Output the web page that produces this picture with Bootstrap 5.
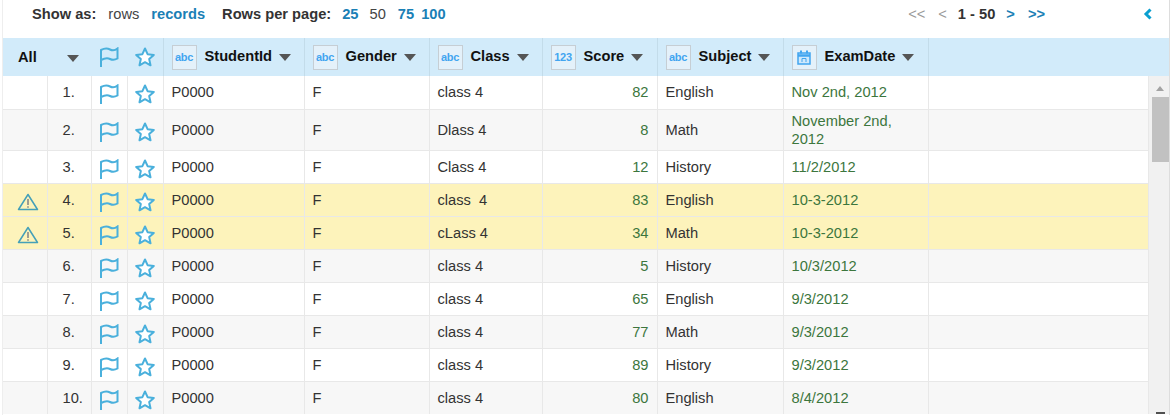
<!DOCTYPE html>
<html lang="en">
<head>
  <meta charset="UTF-8">
  <meta name="viewport" content="width=device-width, initial-scale=1">
  <title>Grid</title>
  <link href="https://cdn.jsdelivr.net/npm/bootstrap@5.3.0/dist/css/bootstrap.min.css" rel="stylesheet">
  <style>
    body { font-family: "Liberation Sans", Arial, sans-serif; font-size: 11pt; color: #333; background: #fff; overflow: hidden; }
    a { text-decoration: none; color: #1a80b6; }
    .grid-wrap { width: 1168px; height: 415px; margin-left: 2px; border-left: 1px solid #eee; border-right: 1px solid #ddd; overflow: hidden; }
    .grid-toolbar { height: 38px; padding: 0 16px 10px 29px; font-weight: 700; }
    .tb-plain { font-weight: 400; color: #444; }
    .tb-muted { color: #999; }
    .sp-7 { margin-left: 7px; }
    .sp-11 { margin-left: 11px; }
    .sp-12 { margin-left: 12px; }
    .sp-13 { margin-left: 13px; }
    .sp-17 { margin-left: 17px; }
    .pager-gap { margin-left: 98px; }
    .grid-table { table-layout: fixed; width: 1146px; margin: 0; border-collapse: collapse; font-size: 11pt; line-height: 18px; --bs-table-color: #333; color: #333; }
    .grid-table col.c-all, .grid-table col.c-num { width: 44px; }
    .grid-table col.c-flag, .grid-table col.c-star { width: 36px; }
    .grid-table col.c-id { width: 141px; }
    .grid-table col.c-gender { width: 125px; }
    .grid-table col.c-class { width: 113px; }
    .grid-table col.c-score { width: 115px; }
    .grid-table col.c-subject { width: 126px; }
    .grid-table col.c-date { width: 145px; }
    .head-table { width: 1166px; --bs-table-bg: #d2ebfa; }
    .head-table th { height: 38px; padding: 0 8px; border: 0; border-right: 1px solid #c3dcea; white-space: nowrap; font-weight: 700; color: #111; vertical-align: middle; }
    .head-table th.no-line { border-right: 0; }
    .head-table th.pad-wide { padding-left: 15px; }
    .head-table th.pad-caret { padding-left: 13px; }
    .head-table th.ico-cell, .grid-table td.ico-cell { padding: 0; text-align: center; }
    .type-ico { display: inline-flex; align-items: center; justify-content: center; width: 25px; height: 25px; margin-right: 8px; border: 1px solid #c6ced4; background: #e4f1fa; color: #42a5f0; font-size: 11px; font-weight: 700; letter-spacing: -.3px; vertical-align: middle; }
    .sort-caret { display: inline-block; width: 0; height: 0; margin-left: 7px; border-left: 6px solid transparent; border-right: 6px solid transparent; border-top: 7px solid #555; vertical-align: 0; }
    .grid-body { height: 338px; overflow: hidden; }
    .grid-body .grid-table td { height: 33px; padding: 2px 8px; border: 0; border-right: 1px solid #e8e8e8; border-bottom: 1px solid #e8e8e8; vertical-align: middle; }
    .grid-body .grid-table td.ico-cell { padding: 4px 0 0; }
    .grid-body .grid-table td.warn-cell { padding-left: 6px; }
    .grid-body .grid-table td.num-cell { padding-left: 15px; }
    .val-num { color: #3c763d !important; text-align: right; }
    .val-date { color: #3c763d !important; }
    .row-alt { --bs-table-bg: #f7f7f7; }
    .row-warn { --bs-table-bg: #fdf3bb; }
    .fake-scroll { width: 20px; height: 338px; background: #f1f1f1; flex: none; padding-left: 3px; }
    .scroll-up { height: 21px; padding-top: 10px; }
    .scroll-up i { display: block; width: 0; margin-left: 4px; border-left: 4.5px solid transparent; border-right: 4.5px solid transparent; border-bottom: 5px solid #a3a3a3; }
    .scroll-thumb { width: 17px; height: 65px; background: #c1c1c1; }
    .scroll-down { width: 9px; height: 2px; margin-left: 4px; background: #505050; }
    svg { display: inline-block; vertical-align: middle; }
  </style>
</head>
<body>
<div class="grid-wrap">
  <div class="grid-toolbar d-flex align-items-center">
    <span>Show as:</span>
    <span class="tb-plain sp-12">rows</span>
    <a href="#" class="sp-12">records</a>
    <span class="sp-17">Rows per page:</span>
    <a href="#" class="sp-11">25</a>
    <span class="tb-plain sp-11">50</span>
    <a href="#" class="sp-12">75</a>
    <a href="#" class="sp-7">100</a>
    <div class="ms-auto d-flex align-items-center">
      <span class="tb-muted tb-plain">&lt;&lt;</span>
      <span class="tb-muted tb-plain sp-13">&lt;</span>
      <span class="sp-11">1 - 50</span>
      <a href="#" class="sp-11">&gt;</a>
      <a href="#" class="sp-13">&gt;&gt;</a>
      <svg class="pager-gap" width="10" height="12" viewBox="0 0 10 12"><path d="M7.500 1.500 3 6l4.500 4.500" fill="none" stroke="#0a9fd0" stroke-width="3"/></svg>
    </div>
  </div>

  <table class="table grid-table head-table">
    <colgroup>
      <col class="c-all"><col class="c-num"><col class="c-flag"><col class="c-star"><col class="c-id"><col class="c-gender"><col class="c-class"><col class="c-score"><col class="c-subject"><col class="c-date"><col>
    </colgroup>
    <thead>
      <tr id="headRow"></tr>
    </thead>
  </table>

  <div class="d-flex">
    <div class="grid-body">
      <table class="table grid-table">
        <colgroup>
          <col class="c-all"><col class="c-num"><col class="c-flag"><col class="c-star"><col class="c-id"><col class="c-gender"><col class="c-class"><col class="c-score"><col class="c-subject"><col class="c-date"><col>
        </colgroup>
        <tbody id="rows"></tbody>
      </table>
    </div>
    <div class="fake-scroll d-flex flex-column">
      <div class="scroll-up"><i></i></div>
      <div class="scroll-thumb"></div>
      <div class="scroll-down mt-auto"></div>
    </div>
  </div>
</div>

<script>
const flag = '<svg width="20" height="20" viewBox="0 0 20 20"><path d="M2 20V3C6 1 9 1.500 11 2.500S16 3.500 18.500 1.500V11.500C16 13 13 13 11 12S5 11.500 2 13" fill="none" stroke="#4ab0dc" stroke-width="2"/></svg>';
const star = '<svg width="20" height="20" viewBox="0 0 20 20"><path d="M10 1.500 12.600 7.200 18.800 7.900 14.200 12.100 15.500 18.300 10 15.200 4.500 18.300 5.800 12.100 1.200 7.900 7.400 7.200Z" fill="#fff" stroke="#4ab0dc" stroke-width="2" stroke-linejoin="round"/></svg>';
const warn = '<svg width="22" height="18" viewBox="0 0 22 18"><path d="M11 1.500 20.500 16.500H1.500Z" fill="none" stroke="#45a0b8" stroke-width="1.500" stroke-linejoin="round"/><path d="M11 6v6M11 13.200v1.600" stroke="#888" stroke-width="1.600"/></svg>';
const cal = '<svg width="14" height="15" viewBox="0 0 14 15"><path d="M1 3h12v11H1Z" fill="#cfe9fc" stroke="#42a5f0" stroke-width="1.500"/><path d="M1 5.500h12" stroke="#42a5f0" stroke-width="2.500"/><path d="M4 .5v3M10 .5v3" stroke="#42a5f0" stroke-width="2"/><path d="M5 12V8.500h4V12" fill="none" stroke="#42a5f0"/></svg>';

const columns = [
  ['StudentId', 'abc'], ['Gender', 'abc'], ['Class', 'abc'],
  ['Score', '123'], ['Subject', 'abc'], ['ExamDate', cal]
];

const caret = '<span class="sort-caret"></span>';
document.getElementById('headRow').innerHTML =
  '<th class="no-line pad-wide">All</th>' +
  '<th class="no-line pad-caret">' + caret + '</th>' +
  '<th class="no-line ico-cell">' + flag + '</th>' +
  '<th class="ico-cell">' + star + '</th>' +
  columns.map(c => '<th><span class="type-ico">' + c[1] + '</span>' + c[0] + caret + '</th>').join('') +
  '<th class="no-line"></th>';

const data = [
  ['class 4', 82, 'English', 'Nov 2nd, 2012'],
  ['Dlass 4', 8, 'Math', 'November 2nd, 2012'],
  ['Class 4', 12, 'History', '11/2/2012'],
  ['class&nbsp; 4', 83, 'English', '10-3-2012', true],
  ['cLass 4', 34, 'Math', '10-3-2012', true],
  ['class 4', 5, 'History', '10/3/2012'],
  ['class 4', 65, 'English', '9/3/2012'],
  ['class 4', 77, 'Math', '9/3/2012'],
  ['class 4', 89, 'History', '9/3/2012'],
  ['class 4', 80, 'English', '8/4/2012']
];

document.getElementById('rows').innerHTML = data.map((r, i) => {
  const cls = r[4] ? 'row-warn' : (i % 2 ? 'row-alt' : '');
  return '<tr class="' + cls + '">' +
    '<td class="ico-cell' + (r[4] ? ' warn-cell' : '') + '">' + (r[4] ? warn : '') + '</td>' +
    '<td class="num-cell">' + (i + 1) + '.</td>' +
    '<td class="ico-cell">' + flag + '</td>' +
    '<td class="ico-cell">' + star + '</td>' +
    '<td>P0000</td><td>F</td>' +
    '<td>' + r[0] + '</td>' +
    '<td class="val-num">' + r[1] + '</td>' +
    '<td>' + r[2] + '</td>' +
    '<td class="val-date">' + r[3] + '</td>' +
    '<td></td></tr>';
}).join('');
</script>
<script src="https://cdn.jsdelivr.net/npm/bootstrap@5.3.0/dist/js/bootstrap.bundle.min.js"></script>
</body>
</html>
